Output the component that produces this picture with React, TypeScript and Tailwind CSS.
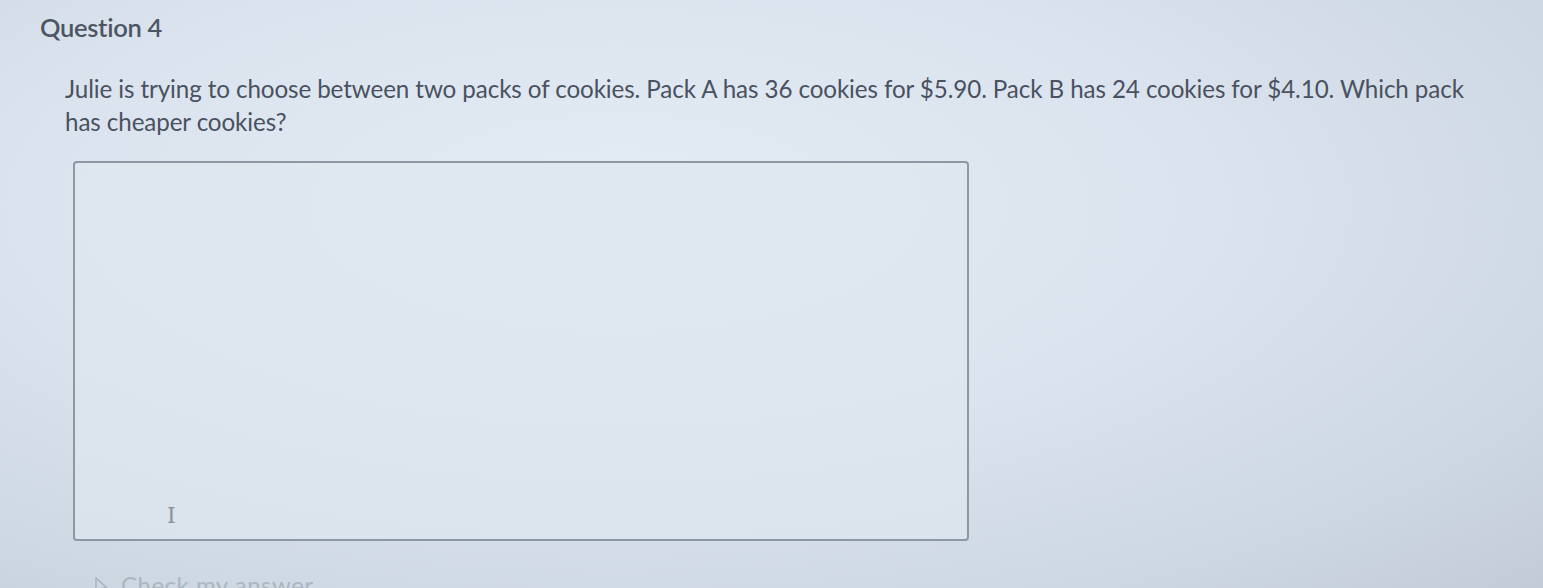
import React from "react";

export default function App() {
  return (
    <div
      className="w-[1543px] h-[588px] overflow-hidden bg-[radial-gradient(ellipse_at_40%_35%,#e3ebf5_0%,#dbe4ee_45%,#cdd7e1_80%,#c3ccd6_100%)]"
      style={{ fontFamily: "Lato, 'Open Sans', sans-serif" }}
    >
      <div className="pl-[40px] pt-[12px]">
        <h2 className="text-[25.5px] leading-[30px] font-semibold text-[#4d5563] tracking-[-0.3px]">
          Question 4
        </h2>
        <p className="mt-[30px] ml-[25px] w-[1440px] text-[24.2px] leading-[33px] text-[#4a5160] tracking-[-0.1px]">
          Julie is trying to choose between two packs of cookies. Pack A has 36 cookies for $5.90. Pack B has 24 cookies for $4.10. Which pack has cheaper cookies?
        </p>
        <div className="mt-[23px] ml-[33px] w-[896px] h-[380px] rounded-[4px] border-2 border-[#8d98a5] bg-[#dee7f0]/70 relative">
          <span className="absolute left-[92px] top-[342px] text-[22px] leading-none text-[#8a939e]" style={{ fontFamily: "'DejaVu Serif', serif" }}>
            I
          </span>
        </div>
        <div className="mt-[30px] ml-[53px] flex items-center gap-[12px] text-[#aab6c0]">
          <svg width="16" height="22" viewBox="0 0 16 22" className="mt-[4px]">
            <path d="M3 2 L3 17 L7 13 L10 20 L12 19 L9 12 L14 12 Z" fill="none" stroke="#a9b4be" strokeWidth="1.6" strokeLinejoin="round" />
          </svg>
          <span className="text-[24px] leading-[28px] tracking-[0.5px]">Check my answer</span>
        </div>
      </div>
    </div>
  );
}
